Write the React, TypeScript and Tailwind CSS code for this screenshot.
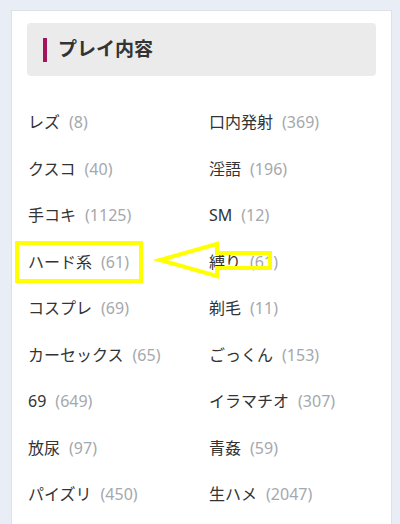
import React from "react";

const items: [string, number][] = [
  ["レズ", 8],
  ["口内発射", 369],
  ["クスコ", 40],
  ["淫語", 196],
  ["手コキ", 1125],
  ["SM", 12],
  ["ハード系", 61],
  ["縛り", 61],
  ["コスプレ", 69],
  ["剃毛", 11],
  ["カーセックス", 65],
  ["ごっくん", 153],
  ["69", 649],
  ["イラマチオ", 307],
  ["放尿", 97],
  ["青姦", 59],
  ["パイズリ", 450],
  ["生ハメ", 2047],
];

const font = { fontFamily: '"Noto Sans", "Noto Sans CJK JP", sans-serif' };

export default function App() {
  return (
    <div className="relative w-[400px] h-[524px] overflow-hidden bg-[#e9edf5] pt-[10px] pl-[11px] pr-[8px]" style={font}>
      {/* Card */}
      <div className="h-[520px] bg-white border border-[#dde1e8] px-[15px] pt-[12px]">
        {/* Heading */}
        <div className="h-[53px] rounded-[4px] bg-[#ebebeb] flex items-center pl-[16px]">
          <span className="w-[4px] h-[24px] bg-[#a3145d]" />
          <h2 className="ml-[11px] text-[19px] font-bold text-[#333] leading-none">プレイ内容</h2>
        </div>

        {/* List */}
        <ul className="mt-[23px] pl-px grid grid-cols-[181px_1fr]">
          {items.map(([name, count]) => (
            <li key={name} className="h-[46.5px] flex items-center text-[16px] text-[#333]">
              <span>{name}</span>
              <span className="ml-[9px] text-[16px] text-[#a5a8ad]">({count})</span>
            </li>
          ))}
        </ul>
      </div>

      {/* Annotation overlay */}
      <svg className="absolute left-0 top-0 pointer-events-none" width="400" height="524" viewBox="0 0 400 524">
        <rect x="17" y="243" width="124" height="38" fill="none" stroke="#ffff00" strokeWidth="4" />
        <polygon
          points="160,260 217,244 217,253 270,253 270,268 217,268 217,276"
          fill="none"
          stroke="#ffff00"
          strokeWidth="4"
          strokeLinejoin="miter"
        />
      </svg>
    </div>
  );
}
